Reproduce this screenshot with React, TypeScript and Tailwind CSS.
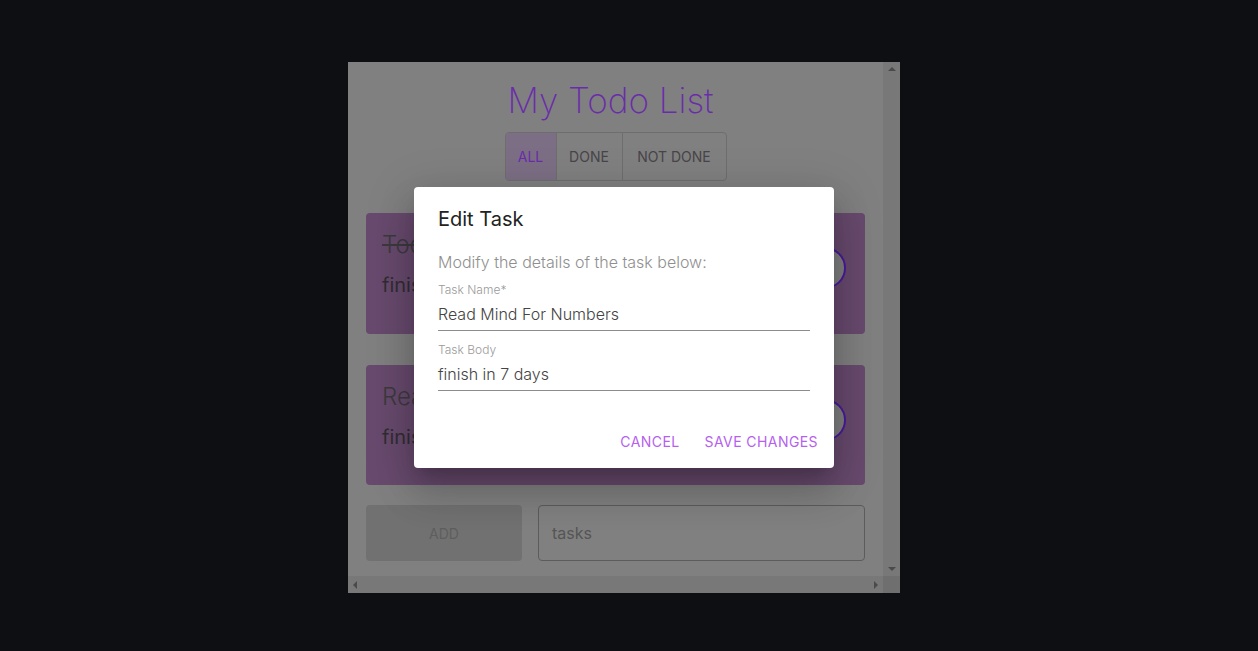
type Task = {
  title: string;
  body: string;
  done: boolean;
  height: string;
};

const tasks: Task[] = [
  { title: "Todo App", body: "finish in 2 days", done: true, height: "h-[121px]" },
  { title: "Read Mind For Numbers", body: "finish in 7 days", done: false, height: "h-[120px]" }
];

const font = "font-['Inter','Noto_Sans',sans-serif]";

const TaskCard = ({ task }: { task: Task }) => (
  <div className={`flex w-full items-start justify-between rounded-[4px] bg-[#684a6e] pl-4 pr-[19px] pt-4 ${task.height}`}>
    <div className="flex flex-col gap-2 whitespace-nowrap">
      <span
        className={`text-[24px] font-light leading-[32px] text-[#3c3a3e] ${task.done ? "line-through" : ""}`}
      >
        {task.title}
      </span>
      <span className="text-[20px] leading-[32px] text-[#302d32]">{task.body}</span>
    </div>
    <div className="mt-[18px] h-[42px] w-[42px] shrink-0 rounded-full border-2 border-[#4a1a9c] bg-[#808080]" />
  </div>
);

const App = () => {
  return (
    <div className={`min-h-screen bg-[#0e0f12] pl-[348px] pt-[62px] ${font}`}>
      <div className="relative grid h-[531px] w-[552px] grid-cols-[535px_17px] grid-rows-[514px_17px] bg-[#808080]">
        {/* page content under the overlay */}
        <div className="flex flex-col items-center overflow-hidden px-[18px] pt-4">
          <h1 className="h-[44px] pr-[10px] text-[35px] font-extralight leading-[44px] text-[#6a2daa]">My Todo List</h1>
          <div className="mt-[10px] flex h-[49px] overflow-hidden rounded-[4px] border border-[#6e6e6e] text-[14px]">
            <button className="w-[50px] bg-[#7c6f85] uppercase text-[#6a2daa]">ALL</button>
            <button className="w-[66px] border-l border-[#6e6e6e] uppercase text-[#474548]">DONE</button>
            <button className="w-[104px] border-l border-[#6e6e6e] uppercase text-[#474548]">NOT DONE</button>
          </div>
          <div className="mt-8 flex w-full flex-col gap-[31px]">
            {tasks.map((t) => (
              <TaskCard key={t.title} task={t} />
            ))}
          </div>
          <div className="mt-5 flex w-full gap-4">
            <button className="h-[56px] w-[156px] shrink-0 rounded-[4px] bg-[#717171] text-[14px] text-[#5e5e5e]">
              ADD
            </button>
            <div className="flex h-[56px] flex-1 items-center rounded-[4px] border border-[#5c5c5c] px-[13px] text-[16px] text-[#555]">
              tasks
            </div>
          </div>
        </div>

        {/* vertical scrollbar */}
        <div className="flex flex-col items-center justify-between bg-[#787878] py-[5px]">
          <div className="h-0 w-0 border-x-[4px] border-b-[4px] border-x-transparent border-b-[#4a4a4a]" />
          <div className="h-0 w-0 border-x-[4px] border-t-[4px] border-x-transparent border-t-[#4a4a4a]" />
        </div>
        {/* horizontal scrollbar */}
        <div className="flex items-center justify-between bg-[#787878] px-[5px]">
          <div className="h-0 w-0 border-y-[4px] border-r-[4px] border-y-transparent border-r-[#4a4a4a]" />
          <div className="h-0 w-0 border-y-[4px] border-l-[4px] border-y-transparent border-l-[#4a4a4a]" />
        </div>
        <div className="bg-[#6f6f6f]" />

        {/* dialog */}
        <div className="absolute left-[66px] top-[125px] flex h-[281px] w-[420px] flex-col rounded-[4px] bg-white px-6 shadow-[0_11px_15px_-7px_rgba(0,0,0,0.2),0_24px_38px_3px_rgba(0,0,0,0.14),0_9px_46px_8px_rgba(0,0,0,0.12)]">
          <div className="h-[63px] shrink-0 pt-4 text-[20px] leading-[32px] text-[#222]">Edit Task</div>
          <div className="h-[24px] text-[16px] font-light leading-[24px] text-[#8f8f8f]">Modify the details of the task below:</div>
          <div className="mt-2 h-[16px] text-[12px] font-light leading-[16px] text-[#9a9a9a]">Task Name*</div>
          <div className="mt-1 border-b border-[#8c8c8c] pb-1 text-[16px] font-light leading-[24px] text-[#444]">
            Read Mind For Numbers
          </div>
          <div className="mt-[11px] h-[16px] text-[12px] font-light leading-[16px] text-[#9a9a9a]">Task Body</div>
          <div className="mt-1 border-b border-[#8c8c8c] pb-1 text-[16px] font-light leading-[24px] text-[#444]">
            finish in 7 days
          </div>
          <div className="-mr-4 mt-8 flex justify-end gap-[9px]">
            <button className="h-9 px-2 text-[14px] uppercase tracking-[0.03em] text-[#b65ff0]">CANCEL</button>
            <button className="h-9 px-2 text-[14px] uppercase tracking-[0.03em] text-[#b65ff0]">SAVE CHANGES</button>
          </div>
        </div>
      </div>
    </div>
  );
};

export default App;
